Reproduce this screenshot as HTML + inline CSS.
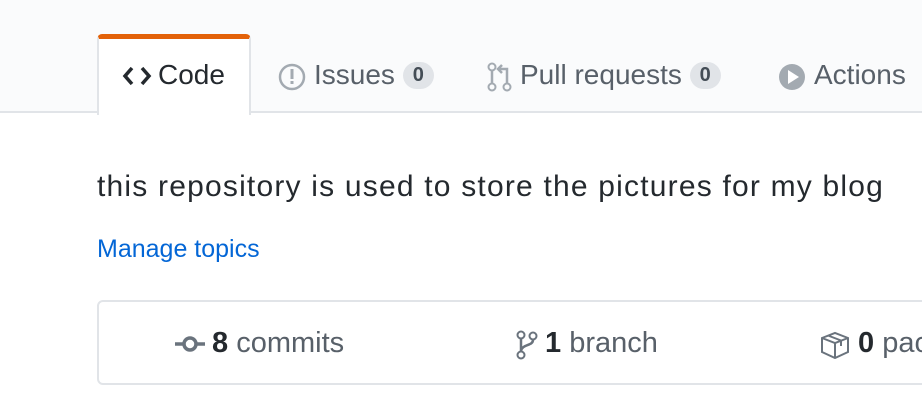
<!DOCTYPE html>
<html><head><style>
*{margin:0;padding:0;box-sizing:border-box}
body{width:922px;height:404px;overflow:hidden;background:#fff;font-family:"Liberation Sans",sans-serif;position:relative;color:#24292e}
.top{position:absolute;left:0;top:0;width:922px;height:113px;background:#fafbfc;border-bottom:2px solid #e1e4e8}
.tab{position:absolute;top:34px;height:81px;background:#fff;border:2px solid #e1e4e8;border-top:5px solid #e36209;border-bottom:none;border-radius:5px 5px 0 0;left:97px;width:154px}
.t{position:absolute;top:59px;font-size:28px;color:#586069;white-space:nowrap}
.cnt{display:inline-block;background:#e1e4e8;color:#444d56;border-radius:20px;font-size:20px;font-weight:bold;padding:2px 10px;vertical-align:3px}
.desc{position:absolute;left:97px;top:170px;font-size:30px;letter-spacing:1.2px;color:#24292e;white-space:nowrap}
.mt{position:absolute;left:97px;top:235px;font-size:25px;color:#0366d6}
.box{position:absolute;left:97px;top:300px;width:860px;height:85px;border:2px solid #e1e4e8;border-radius:6px}
.s{position:absolute;top:327px;font-size:29px;color:#586069;white-space:nowrap}
.s b{color:#24292e}
svg{position:absolute}
</style></head><body>
<div class="top"></div>
<div class="tab"></div>
<svg style="left:122px;top:65px" width="30" height="22" viewBox="0 0 30 22"><path d="M10 3 L3 11 L10 19 M20 3 L27 11 L20 19" stroke="#24292e" stroke-width="3.5" fill="none"/></svg>
<div class="t" style="left:158px;color:#24292e">Code</div>
<svg style="left:278px;top:63px" width="28" height="28"><circle cx="14" cy="14" r="12" stroke="#a3aab1" stroke-width="2.5" fill="none"/><rect x="12.5" y="6" width="3" height="10" fill="#a3aab1"/><rect x="12.5" y="18" width="3" height="3" fill="#a3aab1"/></svg>
<div class="t" style="left:314px">Issues <span class="cnt">0</span></div>
<svg style="left:487px;top:62px" width="26" height="30"><circle cx="5" cy="5" r="3.5" stroke="#a3aab1" stroke-width="2" fill="none"/><circle cx="5" cy="25" r="3.5" stroke="#a3aab1" stroke-width="2" fill="none"/><circle cx="20" cy="25" r="3.5" stroke="#a3aab1" stroke-width="2" fill="none"/><path d="M5 9V21M20 21V7H12M15 3L11 7L15 11" stroke="#a3aab1" stroke-width="2.5" fill="none"/></svg>
<div class="t" style="left:520px">Pull requests <span class="cnt">0</span></div>
<svg style="left:778px;top:63px" width="28" height="28"><circle cx="14" cy="14" r="13" fill="#a3aab1"/><path d="M10 7L21 14L10 21Z" fill="#fff"/></svg>
<div class="t" style="left:814px">Actions</div>
<div class="desc">this repository is used to store the pictures for my blog</div>
<div class="mt">Manage topics</div>
<div class="box"></div>
<svg style="left:175px;top:334px" width="32" height="20"><path d="M0 10H30" stroke="#6a737d" stroke-width="3.5"/><circle cx="15" cy="10" r="6" stroke="#6a737d" stroke-width="3.5" fill="#fff"/></svg>
<div class="s" style="left:212px"><b>8</b> commits</div>
<svg style="left:516px;top:330px" width="24" height="30"><circle cx="5" cy="5" r="3.5" stroke="#6a737d" stroke-width="2" fill="none"/><circle cx="5" cy="25" r="3.5" stroke="#6a737d" stroke-width="2" fill="none"/><circle cx="17" cy="6" r="3.5" stroke="#6a737d" stroke-width="2" fill="none"/><path d="M5 9V21M17 10C17 16 6 14 5 21" stroke="#6a737d" stroke-width="2.5" fill="none"/></svg>
<div class="s" style="left:545px"><b>1</b> branch</div>
<svg style="left:820px;top:331px" width="30" height="28"><path d="M2 7L15 2L28 7V21L15 27L2 21Z M2 7L15 12L28 7 M15 12V27 M8 4.5L21 9.5V15" stroke="#6a737d" stroke-width="2" fill="none"/></svg>
<div class="s" style="left:858px"><b>0</b> pac</div>
</body></html>
